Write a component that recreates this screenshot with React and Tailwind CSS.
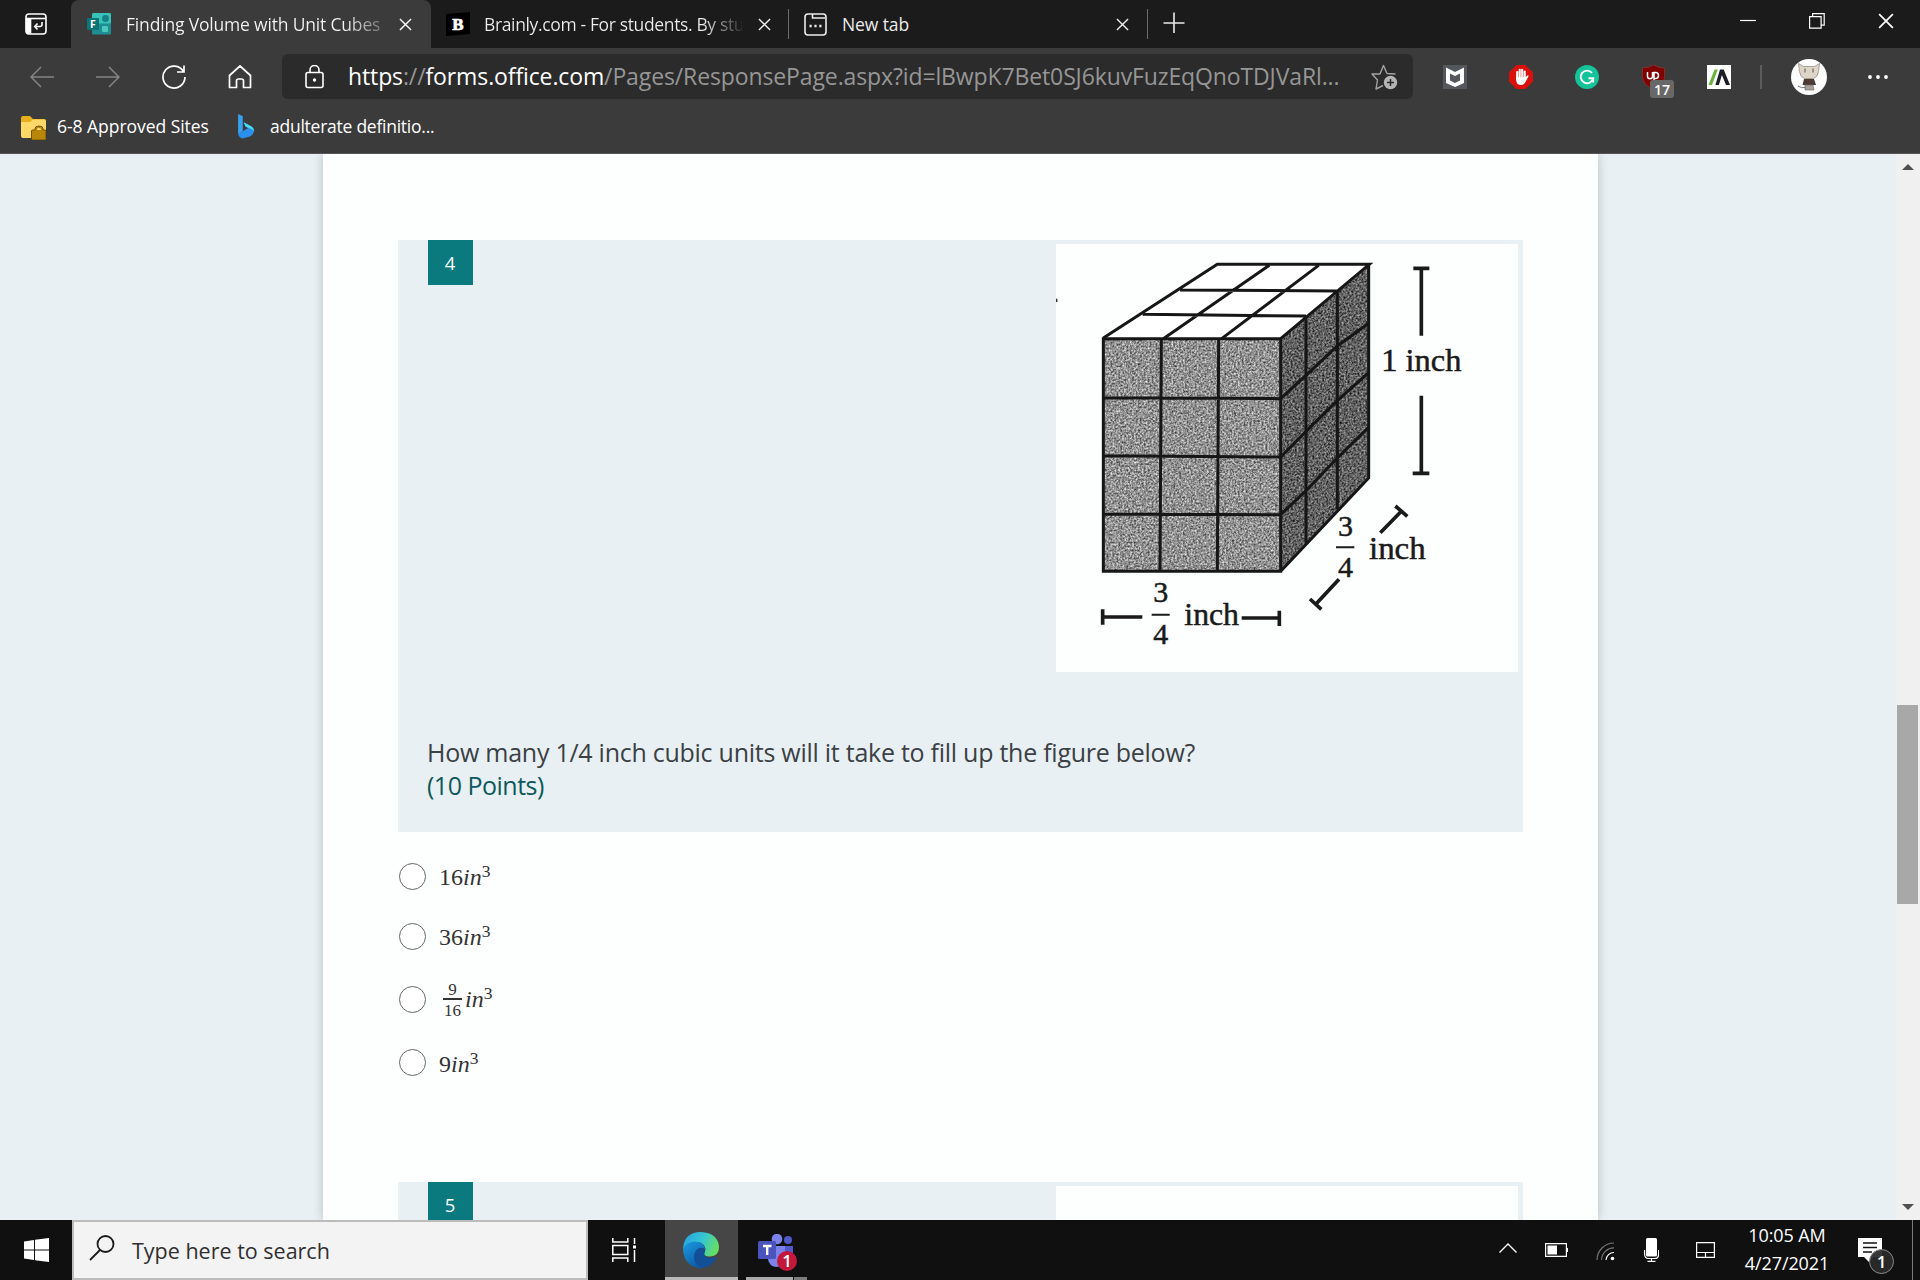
import React from 'react'

const uiFont = "font-['Open_Sans','Noto_Sans',sans-serif]"

function CloseX({ className }) {
  return (
    <svg className={className} viewBox="0 0 14 14" fill="none" stroke="currentColor" strokeWidth="1.5">
      <path d="M1 1L13 13M13 1L1 13" />
    </svg>
  )
}

function FormsIcon() {
  return (
    <svg className="w-6 h-[22px] shrink-0" viewBox="0 0 24 22">
      <rect x="5" y="0" width="19" height="21.5" rx="1.5" fill="#1d8f92" />
      <rect x="5" y="0" width="19" height="10.5" rx="1.5" fill="#37c2b8" />
      <circle cx="18.5" cy="5.5" r="3.4" fill="#177f83" />
      <rect x="15" y="13" width="6" height="6" rx="1" fill="#4bc9bf" />
      <rect x="0" y="5" width="12" height="12" rx="1" fill="#0d7377" />
      <text x="6" y="14.6" textAnchor="middle" fontSize="10.5" fontWeight="700" fill="#fff" fontFamily="Open Sans">F</text>
    </svg>
  )
}

function TabStrip() {
  return (
    <div className="flex h-12 bg-[#1b1b1b] text-[#ececec] text-[17.5px]">
      <div className="w-[71px] flex items-center pl-[25px]">
        <svg className="w-[22px] h-[22px]" viewBox="0 0 22 22" fill="none" stroke="#fff" strokeWidth="1.6">
          <rect x="1" y="1" width="20" height="20" rx="3" />
          <path d="M1 5.5h20" />
          <path d="M1.500 6h4v14h-2a2 2 0 0 1-2-2z" fill="#fff" />
          <path d="M17 9v2.500q0 2-2 2H10M12.500 10.500L9.700 13.500l2.800 3" />
        </svg>
      </div>

      {/* Active tab */}
      <div className="w-[360px] flex items-center pl-4 bg-[#3b3b3b] rounded-t-lg">
        <FormsIcon />
        <span className="ml-[15px] w-[256px] overflow-hidden whitespace-nowrap tracking-[-0.18px] bg-linear-to-r from-[#f5f5f5] from-85% to-[#777] to-100% bg-clip-text text-transparent">
          Finding Volume with Unit Cubes
        </span>
        <CloseX className="w-[13px] h-[13px] ml-[17px] text-white" />
      </div>

      <div className="w-[357px] flex items-center pl-[15px]">
        <svg className="w-6 h-6 shrink-0" viewBox="0 0 24 24">
          <path d="M0 2L24 0V22L0 24Z" fill="#000" />
          <text x="12" y="18" textAnchor="middle" fontSize="17" fontWeight="700" fill="#fff" stroke="#fff" strokeWidth=".7" fontFamily="Liberation Serif">B</text>
        </svg>
        <span className="ml-[14px] w-[258px] overflow-hidden whitespace-nowrap tracking-[-0.36px] bg-linear-to-r from-[#ececec] from-85% to-[#333] to-100% bg-clip-text text-transparent">
          Brainly.com - For students. By stu
        </span>
        <CloseX className="w-[13px] h-[13px] ml-[16px]" />
      </div>
      <div className="w-px h-[30px] mt-[9px] bg-[#6a6a6a]" />

      <div className="w-[358px] flex items-center pl-[15px]">
        <svg className="w-[23px] h-[23px]" viewBox="0 0 23 23" fill="none" stroke="#ececec" strokeWidth="1.6">
          <rect x="1" y="1" width="21" height="21" rx="3" />
          <path d="M8.500 1v4h13" />
          <path d="M5.500 13h2.200M10.400 13h2.200M15.300 13h2.200" strokeWidth="2.400" />
        </svg>
        <span className="ml-[15px] w-[274px] tracking-[-0.1px]">New tab</span>
        <CloseX className="w-[13px] h-[13px]" />
      </div>
      <div className="w-px h-[30px] mt-[9px] bg-[#6a6a6a]" />
      <svg className="w-[22px] h-[22px] ml-[15px] mt-3" viewBox="0 0 22 22" stroke="#ececec" strokeWidth="1.6">
        <path d="M11 0.500V21M0.500 11H21.500" />
      </svg>

      {/* Window controls */}
      <div className="flex-1 flex justify-end items-start pt-[13px] pr-[26px] gap-[53px] text-white">
        <svg className="w-4 h-4" viewBox="0 0 16 16" stroke="currentColor" strokeWidth="1.2"><path d="M0 7.500h16" /></svg>
        <svg className="w-4 h-4" viewBox="0 0 16 16" fill="none" stroke="currentColor" strokeWidth="1.2">
          <path d="M.6 3.600h11.500v11.600H.6zM3.600 3.400V.6h11.600v11.600h-3" />
        </svg>
        <CloseX className="w-4 h-4" />
      </div>
    </div>
  )
}

function Extensions() {
  return (
    <div className="flex items-center">
      <svg className="w-6 h-6 ml-[30px]" viewBox="0 0 24 24">
        <rect width="24" height="24" fill="#54585c" />
        <path d="M3 2.500L12 7l9-4.500V18l-9 4-9-4zM7 8.500v7.100L12 18l5-2.400V8.500L12 11z" fill="#fff" fillRule="evenodd" />
      </svg>
      <svg className="w-6 h-6 ml-[42px]" viewBox="0 0 24 24">
        <path d="M7.500 0h9L24 7.500v9L16.500 24h-9L0 16.500v-9z" fill="#d9100b" />
        <g stroke="#fff" strokeWidth="2.100" strokeLinecap="round" fill="none">
          <path d="M8.200 7v7M10.700 4.800v8M13.200 4.800v8M15.700 6.500v7" />
        </g>
        <path d="M7.200 12h9.500l2-1.800q1.200 0 .8 1L16.500 17q-1.500 3-4.500 3-4.800 0-4.800-5z" fill="#fff" />
      </svg>
      <svg className="w-6 h-6 ml-[42px]" viewBox="0 0 24 24" fill="none" stroke="#fff" strokeWidth="1.900">
        <circle cx="12" cy="12" r="12" fill="#15c39a" stroke="none" />
        <path d="M17 8A6.300 6.300 0 1 0 18.200 13.200H13.500M18.200 13v4.500" />
      </svg>
      <div className="relative ml-[43px]">
        <svg className="w-[23px] h-6" viewBox="0 0 23 24">
          <path d="M11.500 0Q16 3 22.500 3V11q0 9-11 13Q.5 20 .5 11V3Q7 3 11.500 0z" fill="#800000" stroke="#a33" strokeWidth=".6" />
          <path d="M5.500 7v4.500q0 2.200 2.500 2.200t2.500-2.200V7M12 16V7.600h1.500q3 0 3 3t-3 3H12" fill="none" stroke="#fff" strokeWidth="1.500" />
        </svg>
        <span className="absolute left-[8px] top-[15px] w-6 h-[18px] rounded-[3px] bg-[#686868] text-white text-[14px] leading-[19px] font-semibold text-center">17</span>
      </div>
      <svg className="w-6 h-6 ml-[42px]" viewBox="0 0 24 24">
        <rect width="24" height="24" fill="#fff" />
        <path d="M7.500 4.500h3.300L5 20H1.500z" fill="#6cb33f" />
        <path d="M13 4.500h3.700L23 20h-4L14.900 10l-3 10H8.400z" fill="#1c2026" />
      </svg>
      <div className="w-0.5 h-6 ml-[29px] bg-[#5c5c5c]" />
      <svg className="w-9 h-9 ml-[29px]" viewBox="0 0 36 36">
        <circle cx="18" cy="18" r="18" fill="#fdfdfd" />
        <path d="M7.500 4.500l5 3h11l5-3-1 8q-.5 5.500-5 7h-9q-4.500-1.500-5-7z" fill="#ddd5c8" stroke="#8d8579" strokeWidth=".7" />
        <path d="M14 9.500v4M22 9.500v4" stroke="#5c544c" strokeWidth="1" />
        <path d="M13 20h10l2 6H11.500z" fill="#4b3b35" />
        <path d="M14 26h8l1 5h-9z" fill="#a9a19b" stroke="#6d655f" strokeWidth=".6" />
        <path d="M7 27q3 2.500 8 1.500" stroke="#777" fill="none" />
      </svg>
      <svg className="w-5 h-1.5 ml-[41px]" viewBox="0 0 20 6" fill="#fff">
        <circle cx="2" cy="3" r="1.900" /><circle cx="10" cy="3" r="1.900" /><circle cx="18" cy="3" r="1.900" />
      </svg>
    </div>
  )
}

function Toolbar() {
  return (
    <div className="flex items-center h-[57px] bg-[#3b3b3b]">
      <svg className="w-6 h-[22px] ml-[30px]" viewBox="0 0 24 22" fill="none" stroke="#858585" strokeWidth="1.500">
        <path d="M24 11H1M11 1L1 11l10 10" />
      </svg>
      <svg className="w-6 h-[22px] ml-[42px]" viewBox="0 0 24 22" fill="none" stroke="#858585" strokeWidth="1.500">
        <path d="M0 11h23M13 1l10 10-10 10" />
      </svg>
      <svg className="w-6 h-6 ml-[42px]" viewBox="0 0 24 24" fill="none" stroke="#fff" strokeWidth="1.700">
        <path d="M21.500 6.500A11 11 0 1 0 23 12M22 .5V7h-7" />
      </svg>
      <svg className="w-6 h-6 ml-[42px]" viewBox="0 0 24 24" fill="none" stroke="#fff" strokeWidth="1.700" strokeLinejoin="round">
        <path d="M1.500 10.500L12 1l10.500 9.500V22.500H15.500V16q0-2-2-2h-3q-2 0-2 2v6.500H1.500z" />
      </svg>
      <div className="flex items-center w-[1131px] h-[45px] ml-[30px] pl-[23px] bg-[#2b2b2b] rounded-md">
        <svg className="w-[19px] h-6" viewBox="0 0 19 24" fill="none" stroke="#fff" strokeWidth="1.600">
          <rect x="1" y="7.500" width="17" height="15" rx="2" />
          <path d="M5 7.500V5a4.500 4.500 0 0 1 9 0v2.500" />
          <circle cx="9.500" cy="15" r=".9" fill="#fff" />
        </svg>
        <span className="w-[1000px] ml-6 text-[23px] text-[#969696] whitespace-nowrap tracking-[-0.12px]">
          <span className="text-white">https</span>://<span className="text-white">forms.office.com</span>/Pages/ResponsePage.aspx?id=lBwpK7Bet0SJ6kuvFuzEqQnoTDJVaRl...
        </span>
        <svg className="w-[27px] h-[26px] ml-[23px]" viewBox="0 0 27 26" fill="none" stroke="#a2a2a2" strokeWidth="1.400" strokeLinejoin="round">
          <path d="M12 21.500l-7 3.500L6.500 16 1 10h8L12.500 1.500 16 9.500l8.500.5" />
          <circle cx="19.500" cy="18.500" r="6.700" fill="#b4b4b4" stroke="none" />
          <path d="M19.500 15v7M16 18.500h7" stroke="#2b2b2b" strokeWidth="1.500" />
        </svg>
      </div>
      <Extensions />
    </div>
  )
}

function Bookmarks() {
  return (
    <div className="flex items-center h-[49px] pb-1.5 pl-[21px] bg-[#3b3b3b] border-b border-[#555] text-white text-[17.5px]">
      <svg className="w-[25px] h-6 mt-1" viewBox="0 0 25 24">
        <path d="M0 2q0-2 2-2h7l3 3h11q2 0 2 2v15H0z" fill="#e8ae1c" />
        <path d="M0 6h9l3-2.500h11q2 0 2 2V22H2q-2 0-2-2z" fill="#ffd868" />
        <path d="M10.500 15q0-1 1-1H14v-1.500q0-2.500 4-2.500t4 2.500V14h2q1 0 1 1v9H10.500z" fill="#b8860b" stroke="#6b4a00" strokeWidth=".9" />
        <path d="M16 14v-.6q0-1.400 2-1.400t2 1.400v.6z" fill="#ffd868" />
      </svg>
      <span className="w-[181px] pl-[11px] whitespace-nowrap tracking-[-0.04px]">6-8 Approved Sites</span>
      <svg className="w-4 h-[25px] ml-[11px]" viewBox="0 0 17 27">
        <path d="M0 0l5 2.500v16L0 21.500z" fill="#37a3ef" />
        <path d="M0 21.500l5-3 6-3.500-3-1.500L6 9l8.500 4.500q3 2 2.500 5.500T13.500 24L5 26.500q-4-1-5-5z" fill="#2b8ff0" />
        <path d="M6 9l8.500 4.500q3 2 2.500 5.500-1-3-6-4l-3-1.500z" fill="#4ad9ee" />
      </svg>
      <span className="ml-4 whitespace-nowrap tracking-[-0.25px]">adulterate definitio...</span>
    </div>
  )
}

function PrismFigure() {
  return (
    <svg className="w-[462px] h-[428px] bg-[#fdfefe]" viewBox="48 42 1386 1284">
      <defs>
        <filter id="grainFront" x="0" y="0" width="1" height="1" colorInterpolationFilters="sRGB">
          <feTurbulence type="fractalNoise" baseFrequency="0.17" numOctaves="2" seed="4" />
          <feColorMatrix values="1 0 0 0 .07  1 0 0 0 .07  1 0 0 0 .07  0 0 0 0 1" />
          <feComposite in2="SourceGraphic" operator="in" />
        </filter>
        <filter id="grainSide" x="0" y="0" width="1" height="1" colorInterpolationFilters="sRGB">
          <feTurbulence type="fractalNoise" baseFrequency="0.17" numOctaves="2" seed="9" />
          <feColorMatrix values=".9 0 0 0 -.07  .9 0 0 0 -.07  .9 0 0 0 -.07  0 0 0 0 1" />
          <feComposite in2="SourceGraphic" operator="in" />
        </filter>
      </defs>
      <path d="M190 326H722V1024H190z" fill="#8f8f8f" filter="url(#grainFront)" />
      <path d="M722 326L986 104V744L722 1024z" fill="#606060" filter="url(#grainSide)" />
      <path d="M190 324L532 103H986L722 326z" fill="#fff" />
      <g fill="none" stroke="#161616" strokeWidth="9">
        <path d="M190 326H722V1024H190zM364 326L360 1024M536 326L532 1024M190 503L722 506M190 677L722 681M190 852L722 854" />
        <path d="M190 324L532 103H988L722 326M370 326L688 106M545 326L836 106M308 253L798 258M420 180L892 183" />
        <path d="M986 104V744L722 1024M798 260V938M892 183V838" />
        <path d="M722 506L798 436 892 348 986 280M722 681L798 604 892 512 986 428M722 854L798 782 892 684 986 592" />
      </g>
      <g stroke="#1a1a1a" strokeWidth="11">
        <path d="M1120 115H1168M1144 115V317M1144 497V730M1118 730H1168" />
        <path d="M188 1138V1184M188 1161H307M605 1164H718M718 1142V1188" />
        <path d="M1066 828L1102 859M1084 844L1021 908M897 1048L828 1122M810 1107L844 1138" />
        <path d="M335 1154H389M888 952H943" strokeWidth="6" />
      </g>
      <path d="M48 205q8 3 3 12l-3-1z" fill="#333" />
      <g fill="#1a1a1a" stroke="#1a1a1a" strokeWidth="1.500" fontFamily="Liberation Serif" fontSize="96">
        <text x="1024" y="424" textLength="240" lengthAdjust="spacingAndGlyphs">1 inch</text>
        <text x="987" y="988" textLength="170" lengthAdjust="spacingAndGlyphs">inch</text>
        <text x="433" y="1186" textLength="164" lengthAdjust="spacingAndGlyphs">inch</text>
        <g fontSize="90">
          <text x="340" y="1117">3</text>
          <text x="340" y="1241">4</text>
          <text x="894" y="918">3</text>
          <text x="894" y="1041">4</text>
        </g>
      </g>
    </svg>
  )
}

function Radio() {
  return <span className="w-[27px] h-[27px] shrink-0 rounded-full border-[1.5px] border-[#666] bg-white" />
}

function Cubed() {
  return (
    <span>
      <i>in</i><span className="relative -top-[8px] text-[17.5px]">3</span>
    </span>
  )
}

function NumberBadge({ children }) {
  return (
    <div className="w-[45px] h-[45px] ml-[30px] pr-px bg-[#0b7a7e] text-white text-[18.5px] leading-[46px] text-center">{children}</div>
  )
}

function FormPage() {
  return (
    <div className="flex h-[1066px] overflow-hidden bg-[#e8f0f3]">
      <div className="w-[1275px] ml-[323px] pt-[86px] px-[75px] bg-[#fdfefe] shadow-[0_0_10px_rgba(0,0,0,0.2)]">
        <div className="h-[592px] bg-[#e8f0f3]">
          <div className="flex justify-between h-[479px]">
            <NumberBadge>4</NumberBadge>
            <div className="pt-1 pr-[5px]"><PrismFigure /></div>
          </div>
          <div className="pl-[29px] pt-[17px] text-[25px] leading-[33px] text-[#3b4144]">
            <p className="whitespace-nowrap tracking-[-0.26px]">How many 1/4 inch cubic units will it take to fill up the figure below?</p>
            <p className="text-[#0e585b] tracking-[-0.5px]">(10 Points)</p>
          </div>
        </div>

        <div className="pt-[31px] pl-px text-[#333] text-[24px] leading-[27px] font-['Liberation_Serif',serif]">
          <div className="flex gap-[13px] h-[60px]"><Radio /><span className="pt-px">16<Cubed /></span></div>
          <div className="flex gap-[13px] h-[63px]"><Radio /><span className="pt-px">36<Cubed /></span></div>
          <div className="flex gap-[13px] h-[63px]">
            <Radio />
            <span className="flex items-start">
              <span className="flex flex-col items-center w-[19px] mx-[3px] ml-1 -mt-[3px] text-[17px] leading-[18px]">
                <span className="h-[15px] leading-[13px]">9</span>
                <span className="w-full h-[1.5px] bg-[#333]" />
                <span className="pt-[2px]">16</span>
              </span>
              <Cubed />
            </span>
          </div>
          <div className="flex gap-[13px] h-[133px]"><Radio /><span className="pt-0.5">9<Cubed /></span></div>
        </div>

        <div className="h-[592px] bg-[#e8f0f3] flex justify-between">
          <NumberBadge>5</NumberBadge>
          <div className="pt-1 pr-[5px]"><div className="w-[462px] h-[428px] bg-[#fdfefe]" /></div>
        </div>
      </div>

      {/* Scrollbar */}
      <div className="flex flex-col items-center w-6 ml-auto pl-px pr-0.5 py-[10px] bg-[#f0f0f0]">
        <svg className="w-3 h-1.5" viewBox="0 0 12 6"><path d="M0 6L6 0l6 6z" fill="#505050" /></svg>
        <div className="w-[21px] h-[199px] mt-[535px] bg-[#a8a8a8]" />
        <svg className="w-3 h-1.5 mt-auto" viewBox="0 0 12 6"><path d="M0 0L6 6l6-6z" fill="#505050" /></svg>
      </div>
    </div>
  )
}

function EdgeIcon() {
  return (
    <svg className="w-9 h-9" viewBox="0 0 36 36">
      <defs>
        <linearGradient id="edgeTop" x1="0" y1="0.300" x2="1" y2="0.600">
          <stop offset="0" stopColor="#2aa5e0" />
          <stop offset=".5" stopColor="#35c6d4" />
          <stop offset="1" stopColor="#6be05a" />
        </linearGradient>
        <linearGradient id="edgeLow" x1="0" y1="0" x2="0.600" y2="1">
          <stop offset="0" stopColor="#1b9de2" />
          <stop offset="1" stopColor="#0c59a4" />
        </linearGradient>
      </defs>
      <path d="M0 17Q1 0 18 0 35 1 36 15q0 9-9 9.500-8 0-5-5 2-6-5-9Q7 8 0 17z" fill="url(#edgeTop)" />
      <path d="M0 17Q3 10 11 9.500q10 0 11.500 8Q18 14 14 18q-4 6 1 13 4 4 8 4.500-4 .8-7 .4Q1 34 0 17z" fill="url(#edgeLow)" />
      <path d="M13 18.500q4-4 8.500-1.500 1.300 1.500 0 3-1 3.500 1.500 5 5 2 9.500 0 1.500 0 .5 1.500-4 8-12 9-7-.5-9.500-6.500-1.500-6 1.500-10.500z" fill="#124f97" />
    </svg>
  )
}

function TeamsIcon() {
  return (
    <div className="relative">
      <svg className="w-[35px] h-9" viewBox="0 0 35 36">
        <circle cx="30" cy="6" r="4" fill="#5059c9" />
        <circle cx="19" cy="5" r="5.300" fill="#7b83eb" />
        <path d="M24 12h11v11q-1 6-6 6h-5z" fill="#5059c9" />
        <path d="M10 12h17v14q-1 7-9 7-7-1-8-8z" fill="#7b83eb" />
        <rect x="0" y="7" width="18" height="18" rx="1.500" fill="#4b53bc" />
        <path d="M5 12h8.500M9.200 11.500V21" stroke="#fff" strokeWidth="2.400" />
      </svg>
      <span className="absolute left-[19px] top-[17px] w-5 h-5 rounded-full bg-[#c4173c] text-white text-[17px] leading-5 text-center font-semibold">1</span>
    </div>
  )
}

function Taskbar() {
  return (
    <div className="flex h-[60px] bg-[#101010] text-white">
      <div className="w-[72px] flex items-center pl-6">
        <svg className="w-[25px] h-6" viewBox="0 0 25 24" fill="#fff">
          <path d="M0 3.500L10 2v9.500H0zM11 1.800L25 0v11.500H11zM0 12.500h10V22L0 20.500zM11 12.500h14V24l-14-1.800z" />
        </svg>
      </div>
      <div className="w-[516px] flex items-center pl-[15px] bg-[#f3f3f3] border-2 border-[#bcbcbc]">
        <svg className="w-[26px] h-[26px] -mt-1" viewBox="0 0 26 26" fill="none" stroke="#1a1a1a" strokeWidth="1.800">
          <circle cx="16.500" cy="9" r="8" />
          <path d="M11 15L1 25" />
        </svg>
        <span className="ml-[17px] pt-0.5 text-[21.5px] text-[#2f2f2f] whitespace-nowrap">Type here to search</span>
      </div>
      <div className="w-[77px] flex items-center pl-6">
        <svg className="w-6 h-6" viewBox="0 0 24 24" fill="none" stroke="#fff" strokeWidth="1.500">
          <path d="M.8 0v4h15V0M.8 24v-4h15v4M.8 7.500h15v9H.8zM22.500 0v6M22.500 12v12" />
          <path d="M22.500 7.500v3" strokeWidth="3" />
        </svg>
      </div>
      <div className="w-[73px] flex flex-col items-center bg-[#464646] border-b-[3px] border-[#b9b9b9] pt-3 pr-px">
        <EdgeIcon />
      </div>
      <div className="w-[61px] ml-2 flex flex-col">
        <div className="h-[57px] pl-3 pt-3.5"><TeamsIcon /></div>
        <div className="flex h-[3px]">
          <div className="w-[47px] bg-[#a9a9a9]" />
          <div className="flex-1 ml-px bg-[#7d7d7d]" />
        </div>
      </div>

      {/* System tray */}
      <div className="flex-1 flex items-center justify-end">
        <svg className="w-[18px] h-2.5 -mt-1" viewBox="0 0 18 10" fill="none" stroke="#fff" strokeWidth="1.400"><path d="M.5 9.500L9 1l8.500 8.500" /></svg>
        <svg className="w-[23px] h-3.5 ml-7" viewBox="0 0 23 14" fill="none" stroke="#fff" strokeWidth="1.200">
          <path d="M.6.6h20.800v12.800H.6zM22.400 5v4" />
          <path d="M2.500 2.500h9.500v9H2.500z" fill="#fff" stroke="none" />
        </svg>
        <svg className="w-[19px] h-[19px] ml-7 mt-0.5" viewBox="0 0 19 19" fill="none" stroke="#777" strokeWidth="1.200">
          <path d="M1 18A17 17 0 0 1 18 1M5.500 18A12.500 12.500 0 0 1 18 5.800" />
          <path d="M10 18a8 8 0 0 1 8-7.500" stroke="#fff" />
          <circle cx="16.500" cy="16.500" r="1.800" fill="#fff" stroke="none" />
        </svg>
        <svg className="w-[15px] h-6 ml-[29px]" viewBox="0 0 15 24" fill="none" stroke="#fff" strokeWidth="1.200">
          <rect x="2" y="0" width="11" height="18.500" rx="1.500" fill="#fff" stroke="none" />
          <path d="M.6 12v4q0 4.500 4 4.500h6q4 0 4-4.500v-4M7.500 20.500v3M3.500 23.400h8" />
        </svg>
        <svg className="w-[19px] h-4 ml-[37px]" viewBox="0 0 19 16" fill="none" stroke="#fff" strokeWidth="1.200">
          <path d="M.6.6h17.800v14.800H.6zM.6 10.500h17.800M9.500 10.500v5" />
        </svg>
        <div className="w-[96px] ml-[24px] -mt-0.5 text-center text-[18px] leading-[28px] tracking-[-0.1px] whitespace-nowrap">
          <p>10:05 AM</p>
          <p>4/27/2021</p>
        </div>
        <div className="relative ml-[23px] mr-[30px]">
          <svg className="w-6 h-6" viewBox="0 0 24 24">
            <path d="M0 0h24v19h-8l-5 5-5-5H0z" fill="#fff" />
            <path d="M5 5h14M5 9.500h14M5 14h9" stroke="#101010" strokeWidth="1.300" />
          </svg>
          <span className="absolute left-[11px] top-[11px] w-[25px] h-[25px] rounded-full border border-[#8a8a8a] bg-[#2a2a2aee] text-[17px] leading-[23px] text-center font-semibold">1</span>
        </div>
        <div className="w-px h-full mr-[7px] bg-[#7a7a7a]" />
      </div>
    </div>
  )
}

export default function App() {
  return (
    <div className={`w-[1920px] h-[1280px] overflow-hidden flex flex-col ${uiFont}`}>
      <TabStrip />
      <Toolbar />
      <Bookmarks />
      <FormPage />
      <Taskbar />
    </div>
  )
}
